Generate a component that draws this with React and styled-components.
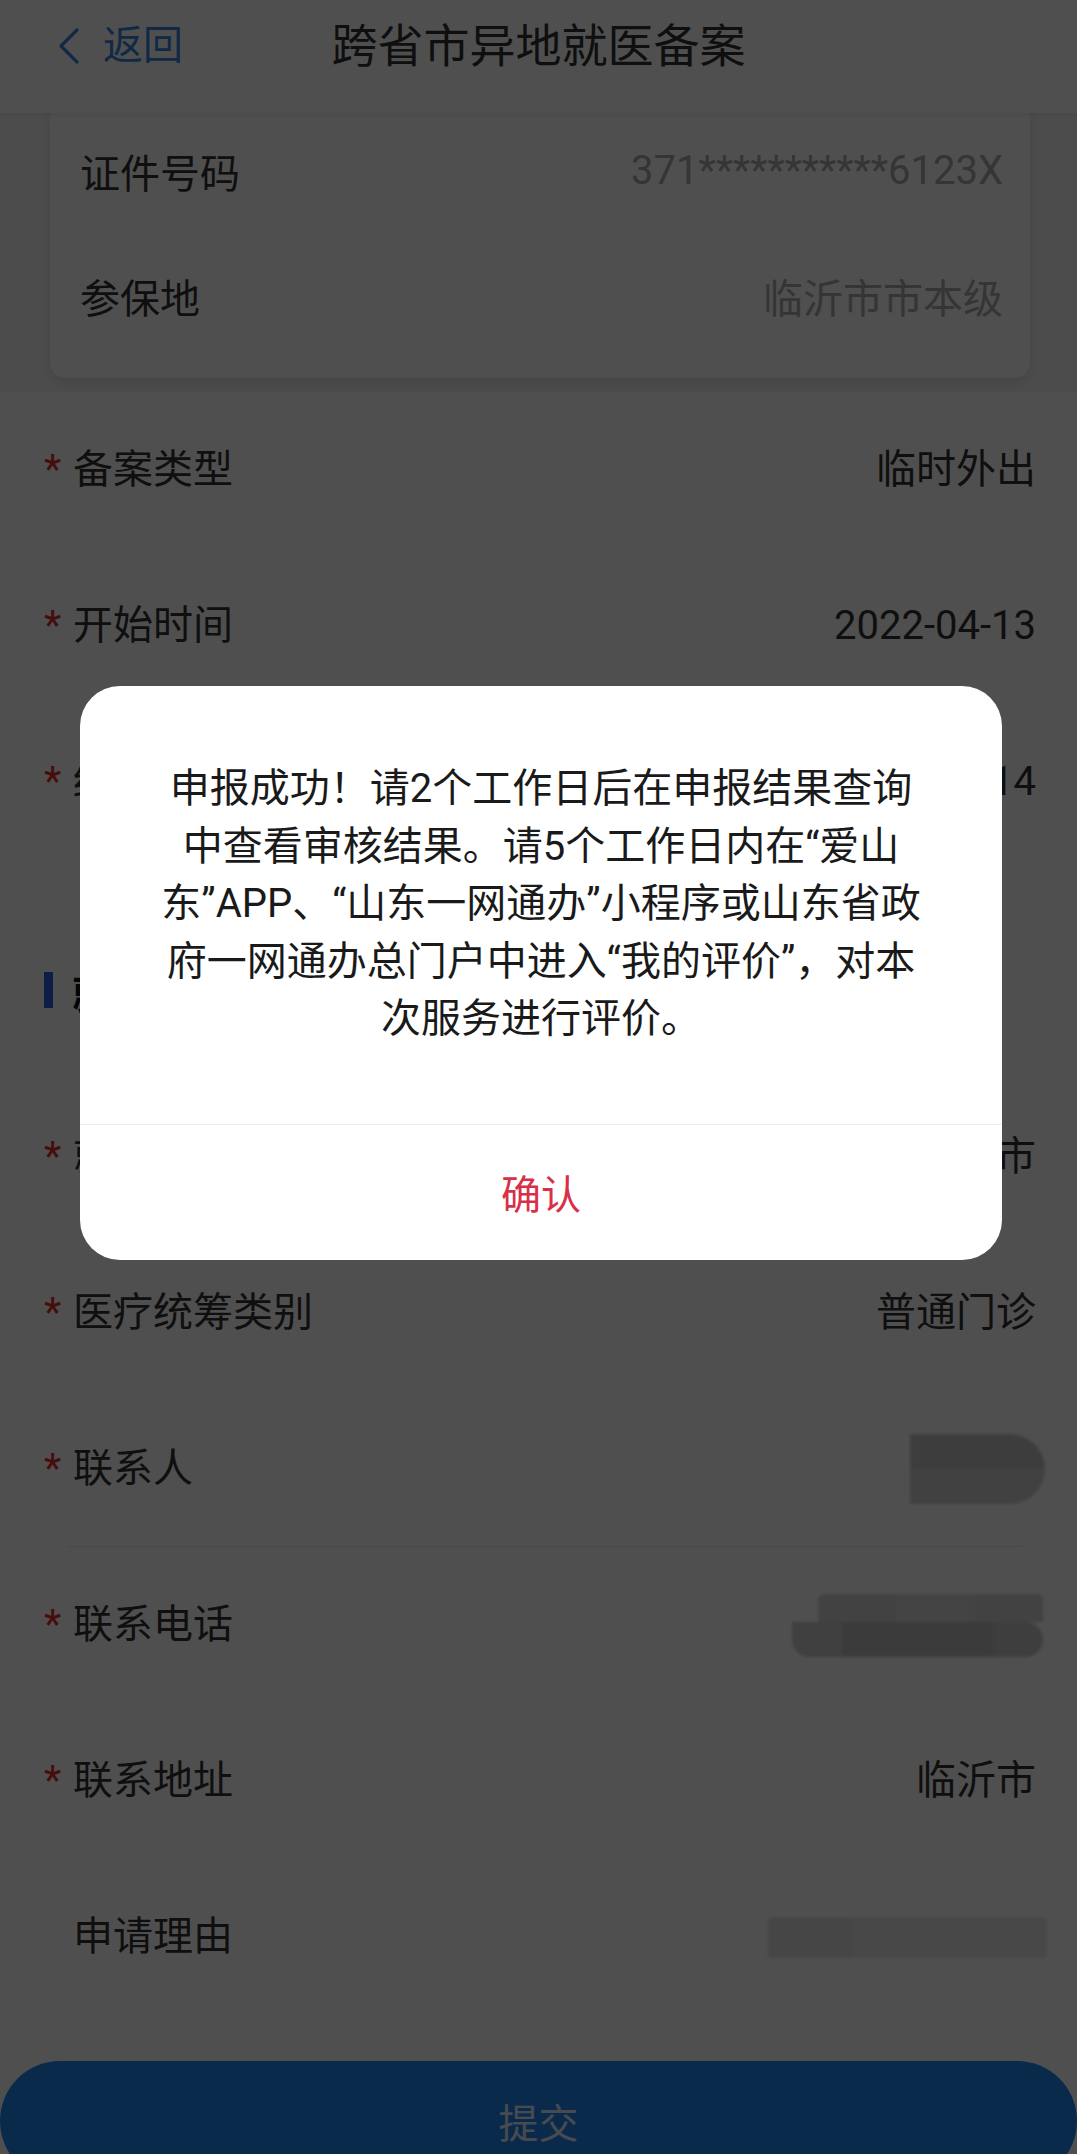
import React from "react";
import styled, { createGlobalStyle } from "styled-components";

const Global = createGlobalStyle`
  html, body { margin: 0; padding: 0; }
  body {
    font-family: Roboto, "Noto Sans CJK SC", sans-serif;
    background: #fff;
    overflow: hidden;
  }
  * { box-sizing: border-box; }
`;

const Page = styled.div`
  position: relative;
  width: 1077px;
  height: 2154px;
  overflow: hidden;
  background: #fff;
`;

const Header = styled.header`
  position: relative;
  z-index: 1;
  height: 113px;
  background: #fff;
  display: grid;
  grid-template-columns: 1fr auto 1fr;
  align-items: start;
  padding: 16px 58px 0;
  box-shadow: 0 2px 6px rgba(0, 0, 0, 0.08);
`;

const Back = styled.div`
  display: flex;
  align-items: center;
  gap: 23px;
  height: 60px;
  color: #3b86e0;
  font-size: 40px;
  line-height: 60px;
`;

const Title = styled.h1`
  margin: 0;
  font-size: 46px;
  line-height: 60px;
  font-weight: 400;
  color: #333;
`;

const TopArea = styled.div`
  background: #f6f6f6;
  padding: 0 47px 14px 50px;
`;

const Card = styled.div`
  margin-top: -5px;
  background: #fff;
  border-radius: 0 0 16px 16px;
  box-shadow: 0 6px 14px rgba(0, 0, 0, 0.1);
  padding: 0 27px 20px 30px;
`;

const CardRow = styled.div`
  height: 125px;
  display: flex;
  justify-content: space-between;
  align-items: center;
  font-size: 40px;
`;

const CardLabel = styled.span`
  color: #333;
`;

const CardValue = styled.span`
  color: #aaa;
`;

const Form = styled.div`
  background: #fff;
`;

const Row = styled.div`
  height: ${(p) => p.$h || 156}px;
  display: grid;
  grid-template-columns: 29px auto 1fr;
  align-items: center;
  padding: 0 41px 0 44px;
  font-size: 40px;
  line-height: 56px;
`;

const Star = styled.span`
  color: #e02a2a;
`;

const Label = styled.span`
  color: #333;
`;

const Value = styled.span`
  justify-self: end;
  color: #333;
`;

const SectionHead = styled.div`
  height: 219px;
  padding-top: 41px;
  display: flex;
  align-items: center;
`;

const SectionBar = styled.span`
  width: 9px;
  height: 36px;
  margin-left: 44px;
  background: #2b5fd9;
`;

const SectionTitle = styled.span`
  margin-left: 19px;
  font-size: 42px;
  font-weight: 700;
  color: #111;
`;

const Divider = styled.div`
  height: 1px;
  margin: 0 54px 0 69px;
  background: #e4e4e4;
`;

const Blur = styled.span`
  justify-self: end;
  display: flex;
  flex-direction: column;
  align-items: ${(p) => p.$align || "stretch"};
  margin-right: ${(p) => p.$mr || 0}px;
  filter: blur(1.5px);
`;

const BlurBar = styled.span`
  display: block;
  width: ${(p) => p.$w}px;
  height: ${(p) => p.$h}px;
  background: ${(p) => p.$bg};
  border-radius: ${(p) => p.$r || "0"};
`;

const SubmitArea = styled.div`
  padding-top: 46px;
`;

const SubmitButton = styled.button`
  display: flex;
  align-items: center;
  justify-content: center;
  width: 100%;
  height: 120px;
  border: none;
  border-radius: 66px;
  background: #2288f5;
  color: #e6eeff;
  font-family: Roboto, "Noto Sans CJK SC", sans-serif;
  font-size: 40px;
`;

const Overlay = styled.div`
  position: absolute;
  inset: 0;
  z-index: 10;
  background: rgba(0, 0, 0, 0.69);
  display: flex;
  justify-content: center;
  align-items: flex-start;
  padding: 686px 0 0 5px;
`;

const Dialog = styled.div`
  width: 922px;
  background: #fff;
  border-radius: 40px;
  overflow: hidden;
`;

const DialogBody = styled.div`
  padding: 74px 40px 76px;
  font-size: 40px;
  line-height: 57.5px;
  text-align: center;
  color: #1a1a1a;
`;

const DialogFooter = styled.div`
  height: 136px;
  border-top: 1px solid #ececec;
  display: flex;
  align-items: center;
  justify-content: center;
  color: #d9304a;
  font-size: 40px;
`;

const Chevron = () => (
  <svg width="22" height="36" viewBox="0 0 22 36" fill="none">
    <path d="M19 2 L3 18 L19 34" stroke="currentColor" strokeWidth="3.2" strokeLinecap="round" strokeLinejoin="round" />
  </svg>
);

const FieldRow = ({ required, label, children, h }) => (
  <Row $h={h}>
    <Star>{required ? "*" : ""}</Star>
    <Label>{label}</Label>
    {children}
  </Row>
);

export default function App() {
  return (
    <Page>
      <Global />
      <Header>
        <Back>
          <Chevron />
          <span>返回</span>
        </Back>
        <Title>跨省市异地就医备案</Title>
        <span />
      </Header>

      <TopArea>
        <Card>
          <CardRow>
            <CardLabel>证件号码</CardLabel>
            <CardValue>371***********6123X</CardValue>
          </CardRow>
          <CardRow>
            <CardLabel>参保地</CardLabel>
            <CardValue>临沂市市本级</CardValue>
          </CardRow>
        </Card>
      </TopArea>

      <Form>
        <FieldRow required label="备案类型">
          <Value>临时外出</Value>
        </FieldRow>
        <FieldRow required label="开始时间">
          <Value>2022-04-13</Value>
        </FieldRow>
        <FieldRow required label="结束时间">
          <Value>2022-04-14</Value>
        </FieldRow>

        <SectionHead>
          <SectionBar />
          <SectionTitle>就医信息</SectionTitle>
        </SectionHead>

        <FieldRow required label="就医地">
          <Value>上海市</Value>
        </FieldRow>
        <FieldRow required label="医疗统筹类别">
          <Value>普通门诊</Value>
        </FieldRow>
        <FieldRow required label="联系人" h={155}>
          <Blur $mr={-9}>
            <BlurBar
              $w={135}
              $h={70}
              $r="0 35px 35px 0"
              $bg="linear-gradient(180deg, #c6c6c6 0 50%, #d2d2d2 50% 100%)"
            />
          </Blur>
        </FieldRow>
        <Divider />
        <FieldRow required label="联系电话">
          <Blur $mr={-7} $align="flex-end">
            <BlurBar
              $w={225}
              $h={28}
              $r="6px 6px 0 0"
              $bg="linear-gradient(90deg, #d6d6d6 0 35%, #dcdcdc 35% 70%, #d4d4d4 70% 100%)"
            />
            <BlurBar
              $w={251}
              $h={35}
              $r="0 18px 18px 18px"
              $bg="linear-gradient(90deg, #cdcdcd 0 20%, #bdbdbd 20% 80%, #c8c8c8 80% 100%)"
            />
          </Blur>
        </FieldRow>
        <FieldRow required label="联系地址">
          <Value>临沂市</Value>
        </FieldRow>
        <FieldRow label="申请理由">
          <Blur $mr={-11}>
            <BlurBar
              $w={279}
              $h={41}
              $r="4px"
              $bg="linear-gradient(90deg, #e2e2e2 0 30%, #e8e8e8 30% 100%)"
            />
          </Blur>
        </FieldRow>
      </Form>

      <SubmitArea>
        <SubmitButton>提交</SubmitButton>
      </SubmitArea>

      <Overlay>
        <Dialog>
          <DialogBody>
            申报成功！请2个工作日后在申报结果查询
            <br />
            中查看审核结果。请5个工作日内在“爱山
            <br />
            东”APP、“山东一网通办”小程序或山东省政
            <br />
            府一网通办总门户中进入“我的评价”，对本
            <br />
            次服务进行评价。
          </DialogBody>
          <DialogFooter>确认</DialogFooter>
        </Dialog>
      </Overlay>
    </Page>
  );
}
